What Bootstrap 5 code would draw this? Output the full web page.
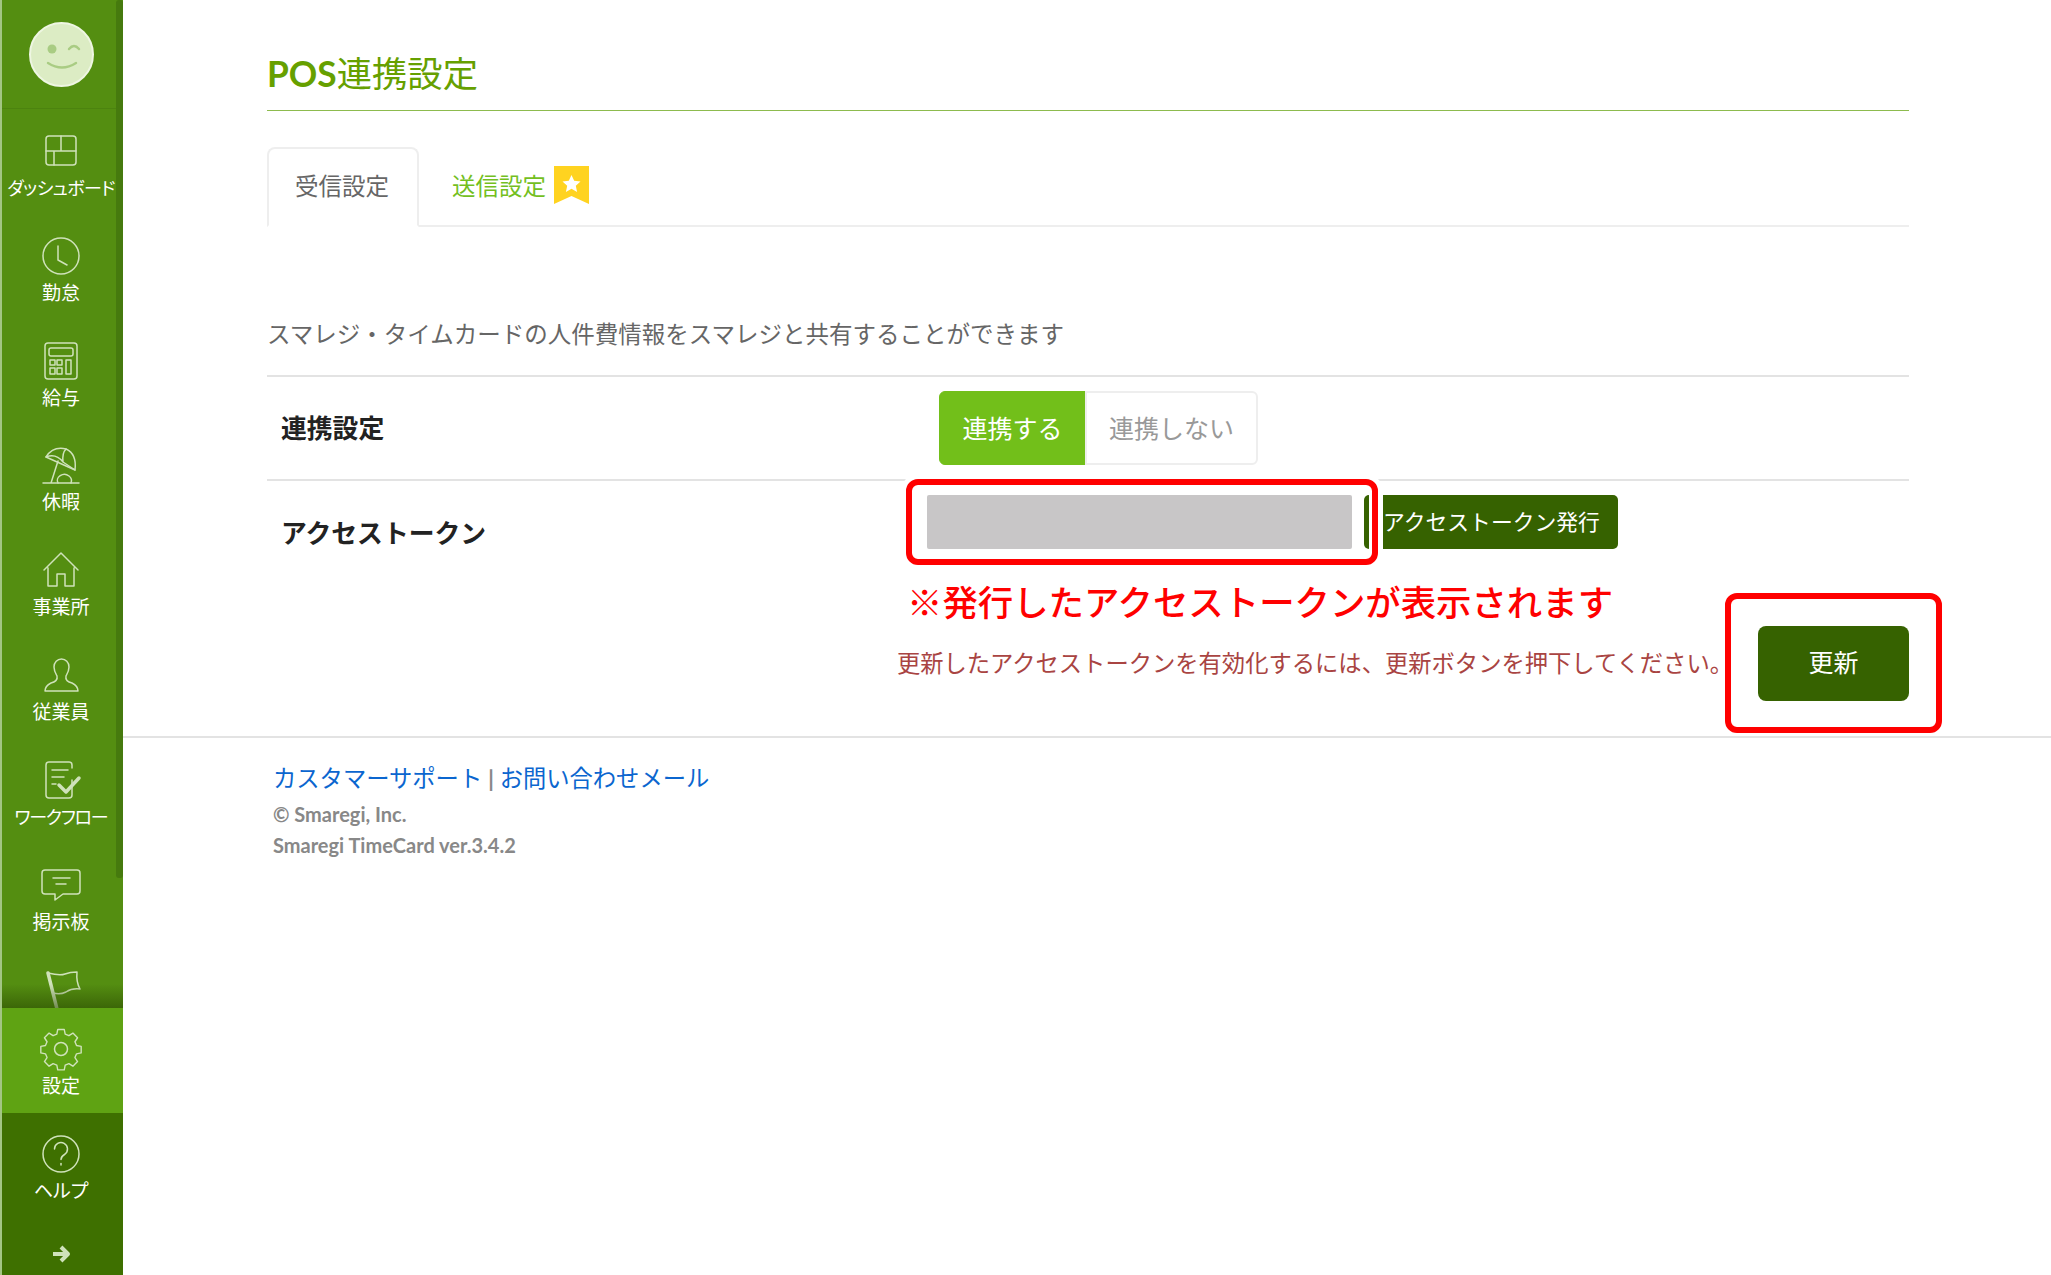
<!DOCTYPE html>
<html lang="ja">
<head>
<meta charset="utf-8">
<title>POS連携設定</title>
<link href="https://cdn.jsdelivr.net/npm/bootstrap@5.3.0/dist/css/bootstrap.min.css" rel="stylesheet">
<style>
html,body{height:100%;overflow:hidden}
body{font-family:Lato,"Noto Sans CJK JP",sans-serif;color:#666;background:#fff}
.sb{width:123px;height:1275px;flex:none;background:#548e11;border-left:2px solid #a3c584;position:relative}
.sb-nav{height:1008px;overflow:hidden;position:relative}
.sb-nav::after{content:"";position:absolute;left:0;right:0;bottom:0;height:24px;background:linear-gradient(transparent,rgba(40,70,0,.55))}
.sb-bar{position:absolute;right:0;top:0;width:7px;height:878px;background:#467a0e;border-radius:3px;z-index:2}
.sb-logo{height:109px;border-bottom:1px solid #4c830f;padding-top:22px}
.sb-logo svg{display:block;margin:0 auto 0 27px}
.sb-item{height:104.8px;display:flex;flex-direction:column;align-items:center;padding-top:20px;color:#fff;text-decoration:none;font-size:19px;line-height:24px;font-weight:400;font-feature-settings:"palt";padding-right:3px}
.sb-item svg{width:44px;height:44px;flex:none;margin-bottom:3px;fill:none;stroke:#cfe2ba;stroke-width:1.5;stroke-linecap:round;stroke-linejoin:round}
.sb-tight{letter-spacing:-.6px;white-space:nowrap;margin:0 -4px;font-size:18px}
.sb-flow{letter-spacing:-1.2px}
.sb-active{height:105px;background:#5fa313;padding-top:19px}
.sb-foot{height:162px;background:#3e7000}
.sb-foot .sb-item{height:132px;padding-top:19px}
.sb-arrow{display:block;margin:0 auto 0 49px}
.pg{flex:1;min-width:0;position:relative}
.pg-top{padding:0 142px 0 144px}
.pg-title{font-size:35.3px;line-height:1;color:#66a000;font-weight:400;margin:0;padding-top:56px;height:111px;border-bottom:1px solid #8dbb4e}
.pg-title b{font-weight:700}
.tabs-x{margin-top:36px;height:80px;border-bottom:2px solid #eee}
.tabs-x .nav-link{height:80px;font-size:23.5px;line-height:1;padding:28px 0 0 26px;border-radius:8px 8px 0 0;white-space:nowrap}
.tabs-x .nav-link.active{width:152px;padding-top:26px;color:#666;border:2px solid #eee;border-bottom-color:#fff}
.tabs-x .tab-two{color:#74bf1f;padding-left:33px;display:flex;align-items:flex-start;gap:8px;border:0}
.rib{margin-top:-9px;display:block}
.lead-x{font-size:23.5px;line-height:34px;margin:90px 0 24px;color:#666;height:34px}
.rw{border-top:2px solid #e3e3e3}
.rw-one{height:104px}
.rw-lab{width:672px;flex:none;font-size:25.8px;font-weight:700;color:#222;padding-left:14px}
.rw-lab-tok{padding-top:33px}
.tg .btn{height:74px;font-size:25px;padding:0;line-height:70px}
.tg .on{width:147px;background:#72bf1a;border-color:#72bf1a;color:#fff}
.tg .off{width:173px;background:#fff;border:2px solid #eee;color:#999}
.rw-two{height:258px;position:relative}
.tok-wrap{padding-top:14px}
.tok{width:425px;height:54px;background:#c8c6c7;border:0;border-radius:2px;margin-left:-12px}
.tok-btn{width:254px;height:54px;background:#366200;border:0;color:#fff;font-size:21.8px;line-height:1;margin-left:12px;text-align:left;padding:0 0 0 19px;border-radius:5px;white-space:nowrap}
.note-red{font-size:35.4px;line-height:46px;color:#f00;font-weight:500;margin:27px 0 0 640px;white-space:nowrap}
.note-help{font-size:23.3px;line-height:34px;color:#a94442;white-space:nowrap}
.upd{width:151px;height:75px;background:#366200;border:0;color:#fff;font-size:25px;border-radius:8px;margin-left:25px}
.upd-row{margin-left:-12px}
.mark-box{position:absolute;border:6px solid #f00;border-radius:12px;box-shadow:0 0 0 5px #fff,inset 0 0 0 3px #fff;z-index:3}
.mark-a{left:639px;top:-2px;width:472px;height:86px}
.mark-b{left:1602px;top:593px;width:217px;height:140px;box-shadow:none}
.ft{border-top:2px solid #e3e3e3;margin-top:-1px;padding:24px 0 0 150px}
.ft-links{font-size:23.3px;line-height:32px;color:#888;font-weight:700}
.ft-links a{color:#0b66cf;font-weight:400;text-decoration:none}
.ft-meta{font-size:20px;line-height:31px;color:#888;font-weight:700;margin-top:5px}
</style>
</head>
<body>
<div class="d-flex">
  <aside class="sb">
    <div class="sb-bar"></div>
    <div class="sb-nav">
      <div class="sb-logo">
        <svg width="65" height="65" viewBox="0 0 65 65"><circle cx="32.5" cy="32.5" r="31.5" fill="#dcecc4" stroke="#eef6e2" stroke-width="2"/><circle cx="23" cy="27" r="4.5" fill="#a9cc83"/><path d="M40 27q5-6 10 0" fill="none" stroke="#a9cc83" stroke-width="2.4" stroke-linecap="round"/><path d="M19 41q14 9 28 0" fill="none" stroke="#a9cc83" stroke-width="2.4" stroke-linecap="round"/></svg>
      </div>
      <a class="sb-item" href="#"><svg viewBox="0 0 44 44"><rect x="7" y="7" width="30" height="29" rx="3"/><path d="M7 22h30M22 7v15M15 22v14"/></svg><span class="sb-tight">ダッシュボード</span></a>
      <a class="sb-item" href="#"><svg viewBox="0 0 44 44"><circle cx="22" cy="22" r="18"/><path d="M19 12v14l9 5"/></svg><span>勤怠</span></a>
      <a class="sb-item" href="#"><svg viewBox="0 0 44 44"><rect x="6" y="4" width="32" height="36" rx="3"/><rect x="10" y="9" width="24" height="8" rx="2"/><path d="M11 21h5v5h-5zM18 21h5v5h-5zM11 29h5v6h-5zM18 29h5v6h-5zM27 21h5v14h-5z"/></svg><span>給与</span></a>
      <a class="sb-item" href="#"><svg viewBox="0 0 44 44"><path d="M7 14Q14 3 27 6q11 5 9 21z"/><path d="M7 14Q17 10 24 19l12 8M24 19q-1-9 3-13M19 18l-7 22M4 40h36"/><path d="M19 40a7 6 0 0 1 11-7 6 6 0 0 1 2 7"/></svg><span>休暇</span></a>
      <a class="sb-item" href="#"><svg viewBox="0 0 44 44"><path d="M5 22L22 5l17 17M9 20v18h9V26h8v12h9V20"/></svg><span>事業所</span></a>
      <a class="sb-item" href="#"><svg viewBox="0 0 44 44"><path d="M15 14a7.500 8 0 1 1 15 0c0 4-2 7-3 9-1 4 2 6 6 7 4 2 6 4 6 8H6c0-4 2-6 6-8 4-1 7-3 6-7-1-2-3-5-3-9z"/></svg><span>従業員</span></a>
      <a class="sb-item" href="#"><svg viewBox="0 0 44 44"><path d="M33 22v15a3 3 0 0 1-3 3H10a3 3 0 0 1-3-3V7a3 3 0 0 1 3-3h20a3 3 0 0 1 3 3v3M13 12h16M13 19h12M13 26h4"/><path d="M20 27l7 7 13-14" stroke-width="3.500"/></svg><span class="sb-tight sb-flow">ワークフロー</span></a>
      <a class="sb-item" href="#"><svg viewBox="0 0 44 44"><path d="M6 7h32a3 3 0 0 1 3 3v18a3 3 0 0 1-3 3H24l-8 6v-6H6a3 3 0 0 1-3-3V10a3 3 0 0 1 3-3zM14 15h17M17 21h10"/></svg><span>掲示板</span></a>
      <a class="sb-item" href="#" aria-label="通知"><svg viewBox="0 0 44 44"><path d="M9 6l9 36" stroke-width="3.500"/><path d="M9 6q12 3 17 1t12-2q-1 10 3 17-8-1-14 3-6 3-13 1"/></svg></a>
    </div>
    <a class="sb-item sb-active" href="#"><svg viewBox="0 0 44 44"><circle cx="22" cy="22" r="6.500"/><path d="M18.500 4h7l1 5 4 1.700 4.300-2.800 5 5-2.800 4.300 1.700 4 5 1v7l-5 1-1.700 4 2.800 4.300-5 5-4.300-2.800-4 1.700-1 5h-7l-1-5-4-1.700-4.300 2.800-5-5 2.800-4.300-1.700-4-5-1v-7l5-1 1.700-4-2.800-4.300 5-5 4.300 2.800 4-1.700z" transform="translate(22 22) scale(.93) translate(-22 -25)"/></svg><span>設定</span></a>
    <div class="sb-foot">
      <a class="sb-item" href="#"><svg viewBox="0 0 44 44"><circle cx="22" cy="22" r="18"/><path d="M15.500 17a6.500 6.500 0 1 1 10 5.500c-2.500 1.500-3.500 2.500-3.500 5"/><path d="M22 31.500v1.500"/></svg><span>ヘルプ</span></a>
      <svg class="sb-arrow" width="20" height="18" viewBox="0 0 20 18"><path d="M2 9h14M10 2l7 7-7 7" fill="none" stroke="#cfe2ba" stroke-width="4" stroke-linejoin="round"/></svg>
    </div>
  </aside>
  <main class="pg">
    <div class="mark-box mark-b"></div>
    <div class="pg-top">
      <h1 class="pg-title"><b>POS</b>連携設定</h1>
      <ul class="nav tabs-x">
        <li class="nav-item"><a class="nav-link active" href="#">受信設定</a></li>
        <li class="nav-item"><a class="nav-link tab-two" href="#">送信設定
          <svg class="rib" width="35" height="38" viewBox="0 0 35 38"><path d="M0 0h35v38L17.500 30 0 38z" fill="#ffd320"/><path d="M17.500 9l2.700 5.800 6.300.7-4.700 4.200 1.300 6.200-5.600-3.200-5.600 3.200 1.300-6.200-4.700-4.200 6.300-.7z" fill="#fff"/></svg>
        </a></li>
      </ul>
      <p class="lead-x">スマレジ・タイムカードの人件費情報をスマレジと共有することができます</p>
      <div class="rw rw-one d-flex align-items-center">
        <div class="rw-lab">連携設定</div>
        <div class="btn-group tg" role="group">
          <button type="button" class="btn on">連携する</button>
          <button type="button" class="btn off">連携しない</button>
        </div>
      </div>
      <div class="rw rw-two">
        <div class="mark-box mark-a"></div>
        <div class="d-flex">
          <div class="rw-lab rw-lab-tok">アクセストークン</div>
          <div class="d-flex align-items-start tok-wrap">
            <input class="form-control tok" type="text" aria-label="アクセストークン">
            <button type="button" class="btn tok-btn">アクセストークン発行</button>
          </div>
        </div>
        <div class="note-red">※発行したアクセストークンが表示されます</div>
        <div class="d-flex justify-content-end align-items-center upd-row">
          <span class="note-help">更新したアクセストークンを有効化するには、更新ボタンを押下してください。</span>
          <button type="button" class="btn upd">更新</button>
        </div>
      </div>
    </div>
    <footer class="ft">
      <div class="ft-links"><a href="#">カスタマーサポート</a> | <a href="#">お問い合わせメール</a></div>
      <div class="ft-meta">© Smaregi, Inc.<br>Smaregi TimeCard ver.3.4.2</div>
    </footer>
  </main>
</div>
</body>
</html>
